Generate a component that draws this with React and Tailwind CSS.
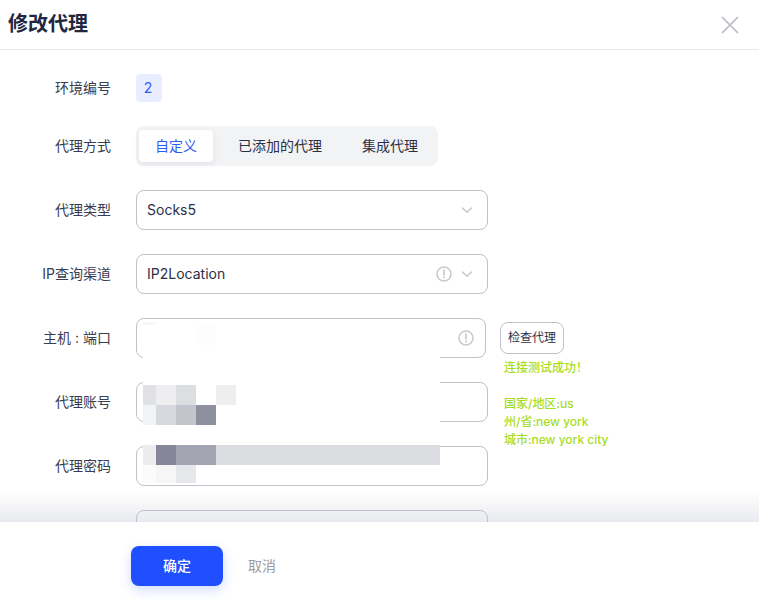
const FONT = "font-['Inter','Noto_Sans_CJK_SC',sans-serif]";

function Chevron() {
  return (
    <svg width="12" height="12" viewBox="0 0 12 12" fill="none" stroke="#c4c6cf" strokeWidth="1.5" strokeLinecap="round" strokeLinejoin="round">
      <path d="M1.5 4 L6 8.2 L10.5 4" />
    </svg>
  );
}

function Info() {
  return (
    <svg width="16" height="16" viewBox="0 0 16 16" fill="none">
      <circle cx="8" cy="8" r="7" stroke="#c9cacf" strokeWidth="1.6" />
      <path d="M8 4v5" stroke="#c9cacf" strokeWidth="1.7" strokeLinecap="round" />
      <circle cx="8" cy="11.4" r="1" fill="#c9cacf" />
    </svg>
  );
}

function Row({ label, children }) {
  return (
    <div className="flex items-center gap-[25px]">
      <div className="w-[111px] shrink-0 pb-[2px] text-right text-[14px] text-[#3a3d52]">{label}</div>
      {children}
    </div>
  );
}

function Field({ children, width = "w-[352px]", surface = "bg-white" }) {
  return (
    <div className={`flex h-10 ${width} shrink-0 items-center rounded-lg border border-[#c0c1cb] ${surface} pl-[10px] pr-[14px] text-[14px] text-[#2c2f45]`}>
      {children}
    </div>
  );
}

function Cell({ w, c, h = "h-5" }) {
  return <div className={`${w} ${h} ${c}`} />;
}

export default function App() {
  return (
    <div className={`relative flex h-[600px] w-[759px] flex-col overflow-hidden bg-white ${FONT}`}>
      <header className="flex h-[50px] shrink-0 items-center justify-between border-b border-[#e8e9ec] pl-2 pr-[20px]">
        <h1 className="pb-[2px] text-[20px] font-bold text-[#23263f]">修改代理</h1>
        <svg width="18" height="18" viewBox="0 0 18 18" stroke="#b9bbc6" strokeWidth="1.7" strokeLinecap="round">
          <path d="M1.5 1.5 L16.5 16.5 M16.5 1.5 L1.5 16.5" />
        </svg>
      </header>

      <main className="relative min-h-0 flex-1 overflow-hidden pt-6">
        {/* fade above the footer, behind the last field's outline */}
        <div className="pointer-events-none absolute inset-x-0 bottom-0 h-[30px] bg-gradient-to-b from-[#ffffff00] to-[#e9eaf0]" />

        <div className="relative flex flex-col gap-6">
          <Row label="环境编号">
            <div className="flex h-7 w-[26px] items-center justify-center rounded bg-[#e8edff] pb-[2px] pr-[2px] text-[14px] text-[#2f5cf5]">2</div>
          </Row>
          <Row label="代理方式">
            <div className="flex h-10 items-center rounded-lg bg-[#f2f3f5] pl-[3px] pr-[5px] text-[14px] text-[#2c2f45]">
              <div className="flex h-8 w-[74px] items-center justify-center rounded bg-white pb-[2px] text-[#2f5cf5] shadow-[0_2px_6px_rgba(40,45,80,0.08)]">自定义</div>
              <div className="flex h-8 w-[134px] items-center justify-center pb-[2px]">已添加的代理</div>
              <div className="flex h-8 w-[86px] items-center justify-center pb-[2px]">集成代理</div>
            </div>
          </Row>
          <Row label="代理类型">
            <Field>
              <span className="flex-1 pb-[2px]">Socks5</span>
              <Chevron />
            </Field>
          </Row>
          <Row label="IP查询渠道">
            <Field>
              <span className="flex-1 pb-[2px]">IP2Location</span>
              <span className="mr-[9px] flex"><Info /></span>
              <Chevron />
            </Field>
          </Row>
          <Row label="主机 : 端口">
            <Field width="w-[350px]">
              <span className="flex-1" />
              <span className="-mr-[3px] flex"><Info /></span>
            </Field>
            <div className="-ml-[11px] flex h-8 w-16 shrink-0 items-center justify-center rounded-lg border border-[#c0c1cb] pb-[1px] text-[12px] text-[#2c2f45]">检查代理</div>
          </Row>
          <Row label="代理账号">
            <Field />
          </Row>
          <Row label="代理密码">
            <Field />
          </Row>
          <Row label="">
            <Field surface="bg-transparent" />
          </Row>
        </div>

        {/* success message beside the fields */}
        <div className="absolute left-[504px] top-[309px] text-[12px] font-medium leading-[18px] tracking-[-0.02px] text-[#a9dc1f]">
          <div>连接测试成功！</div>
          <div className="h-[18px]" />
          <div>国家/地区:us</div>
          <div>州/省:new york</div>
          <div>城市:new york city</div>
        </div>

        {/* mosaic redaction over the host, account and password values */}
        <div className="absolute left-[143px] top-[272px] flex w-[297px] flex-col bg-white">
          <div className="h-[3px] w-[13px] bg-[#f7f7f8]" />
          <div className="ml-[53px] h-5 w-5 bg-[#fdfdfd]" />
          <div className="h-10" />
          <div className="flex">
            <Cell w="w-[13px]" c="bg-[#e0e1e5]" />
            <Cell w="w-5" c="bg-[#eeeef0]" />
            <Cell w="w-5" c="bg-[#dddee2]" />
            <Cell w="w-5" c="bg-white" />
            <Cell w="w-5" c="bg-[#eeeef0]" />
          </div>
          <div className="flex">
            <Cell w="w-[13px]" c="bg-[#f2f3f5]" />
            <Cell w="w-5" c="bg-[#d8d9de]" />
            <Cell w="w-5" c="bg-[#c3c4cc]" />
            <Cell w="w-5" c="bg-[#8e90a0]" />
          </div>
          <div className="h-5" />
          <div className="flex">
            <Cell w="w-[13px]" c="bg-[#ececef]" />
            <Cell w="w-5" c="bg-[#858799]" />
            <Cell w="w-5" c="bg-[#a4a5b2]" />
            <Cell w="w-5" c="bg-[#a3a4b1]" />
            <Cell w="flex-1" c="bg-[#dcdde1]" />
          </div>
          <div className="flex">
            <Cell w="w-[13px]" h="h-[18px]" c="bg-[#fbfbfb]" />
            <Cell w="w-5" h="h-[18px]" c="bg-[#f6f6f7]" />
            <Cell w="w-5" h="h-[18px]" c="bg-[#e6e7ea]" />
          </div>
        </div>
      </main>

      <footer className="flex h-[78px] shrink-0 items-start bg-white pl-[131px] pt-6">
        <button className="h-10 w-[92px] rounded-lg bg-[#1f4fff] pb-[2px] text-[14px] font-medium text-white shadow-[0_4px_12px_rgba(31,79,255,0.2)]">确定</button>
        <span className="ml-[25px] flex h-10 items-center pb-[2px] text-[14px] text-[#9a9ba6]">取消</span>
      </footer>
    </div>
  );
}
